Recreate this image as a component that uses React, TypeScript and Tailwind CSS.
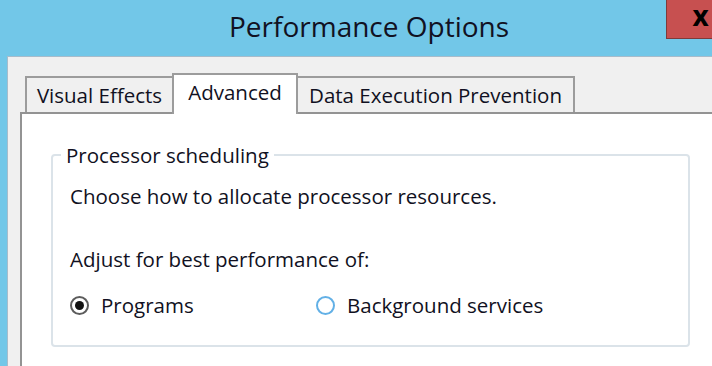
import React from "react";

const font = "font-['Open_Sans','Noto_Sans',sans-serif]";

function Tab({ label, selected, className }: { label: string; selected?: boolean; className: string }) {
  if (selected) {
    return (
      <div
        className={`relative z-10 -mb-[2px] flex h-[41px] justify-center border-x-2 border-t-2 border-[#9c9c9c] bg-white pt-[3px] leading-[28px] ${className}`}
      >
        {label}
      </div>
    );
  }
  return (
    <div
      className={`flex h-[36px] justify-center border-t-2 border-[#9c9c9c] bg-[#f0f0f0] pt-[3px] leading-[28px] ${className}`}
    >
      {label}
    </div>
  );
}

function Radio({ label, checked, className }: { label: string; checked?: boolean; className?: string }) {
  return (
    <label className={`flex items-center gap-[12px] ${className ?? ""}`}>
      {checked ? (
        <span className="flex h-[19px] w-[19px] items-center justify-center rounded-full border-2 border-[#5c5c5c] bg-white">
          <span className="h-[9px] w-[9px] rounded-full bg-[#111111]" />
        </span>
      ) : (
        <span className="h-[19px] w-[19px] rounded-full border-2 border-[#62b0e6] bg-white" />
      )}
      <span>{label}</span>
    </label>
  );
}

export default function App() {
  return (
    <div className={`flex h-[366px] w-[712px] flex-col overflow-hidden bg-[#72c7e8] text-[#111122] ${font}`}>
      {/* Title bar */}
      <div className="flex h-[56px] shrink-0">
        <div className="pl-[229px] pt-[4px] text-[28px] leading-[44px]">Performance Options</div>
        <div className="-mr-[22px] ml-auto flex h-[39px] w-[68px] justify-center border-b border-l border-[#7e3b3b] bg-[#c75050] text-[28px] font-bold leading-[30px] text-black">
          x
        </div>
      </div>

      {/* Client area */}
      <div className="ml-[7px] flex flex-1 flex-col border-l border-t border-[#a7bccb] bg-[#f0f0f0] pl-[12px] pt-[16px] text-[20.5px]">
        <div className="flex items-end pl-[5px]">
          <Tab label="Visual Effects" className="w-[147px] border-l-2" />
          <Tab label="Advanced" selected className="w-[126px]" />
          <Tab label="Data Execution Prevention" className="w-[277px] border-r-2" />
        </div>

        <div className="flex-1 border-l-2 border-t-2 border-[#939393] bg-white pl-[29px] pt-[27px]">
          <fieldset className="h-[206px] w-[639px] rounded-[4px] border-2 border-[#dbe3e9] pl-[17px] pr-[10px]">
            <legend className="-ml-[9px] px-[5px] leading-[28px]">Processor scheduling</legend>
            <p className="mt-[13px] leading-[28px]">Choose how to allocate processor resources.</p>
            <p className="mt-[35px] leading-[28px]">Adjust for best performance of:</p>
            <div className="mt-[18px] flex leading-[28px]">
              <Radio label="Programs" checked className="w-[246px]" />
              <Radio label="Background services" />
            </div>
          </fieldset>
        </div>
      </div>
    </div>
  );
}
